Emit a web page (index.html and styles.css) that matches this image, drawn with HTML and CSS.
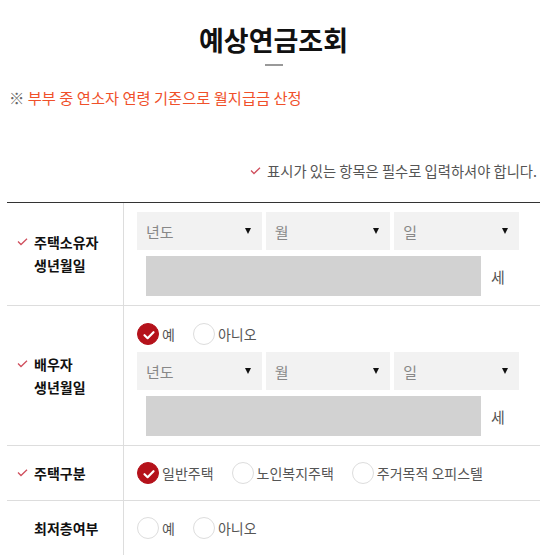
FILE: index.html
```html
<!DOCTYPE html>
<html>
<head>
    <title>예상연금조회</title>
    <link rel="stylesheet" href="styles.css">
</head>
<body>
    <div class="page">
        <h1 class="title">예상연금조회</h1>
        <div class="title-bar"></div>

        <p class="notice"><span class="mark">※</span> 부부 중 연소자 연령 기준으로 월지급금 산정</p>

        <p class="required">
            <svg class="req" width="11" height="8" viewBox="0 0 11 8"><path d="M1 3.5 L4 6.5 L10 0.8" fill="none" stroke="#d0505e" stroke-width="1.3"/></svg>
            표시가 있는 항목은 필수로 입력하셔야 합니다.
        </p>

        <div class="form">
            <!-- 주택소유자 생년월일 -->
            <div class="row">
                <div class="row-label">
                    <div class="label-inner">
                        <svg class="req" width="11" height="8" viewBox="0 0 11 8"><path d="M1 3.5 L4 6.5 L10 0.8" fill="none" stroke="#d0505e" stroke-width="1.3"/></svg>
                        <span>주택소유자<br>생년월일</span>
                    </div>
                </div>
                <div class="row-body pad-date">
                    <div class="dates">
                        <div class="select">년도<i class="arrow"></i></div>
                        <div class="select">월<i class="arrow"></i></div>
                        <div class="select">일<i class="arrow"></i></div>
                    </div>
                    <div class="age">
                        <div class="age-box"></div>
                        <span>세</span>
                    </div>
                </div>
            </div>

            <!-- 배우자 생년월일 -->
            <div class="row">
                <div class="row-label">
                    <div class="label-inner">
                        <svg class="req" width="11" height="8" viewBox="0 0 11 8"><path d="M1 3.5 L4 6.5 L10 0.8" fill="none" stroke="#d0505e" stroke-width="1.3"/></svg>
                        <span>배우자<br>생년월일</span>
                    </div>
                </div>
                <div class="row-body pad-spouse">
                    <div class="radios radios-top">
                        <label class="radio"><span class="dot on"></span>예</label>
                        <label class="radio"><span class="dot"></span>아니오</label>
                    </div>
                    <div class="dates">
                        <div class="select">년도<i class="arrow"></i></div>
                        <div class="select">월<i class="arrow"></i></div>
                        <div class="select">일<i class="arrow"></i></div>
                    </div>
                    <div class="age">
                        <div class="age-box"></div>
                        <span>세</span>
                    </div>
                </div>
            </div>

            <!-- 주택구분 -->
            <div class="row">
                <div class="row-label">
                    <div class="label-inner">
                        <svg class="req" width="11" height="8" viewBox="0 0 11 8"><path d="M1 3.5 L4 6.5 L10 0.8" fill="none" stroke="#d0505e" stroke-width="1.3"/></svg>
                        <span>주택구분</span>
                    </div>
                </div>
                <div class="row-body pad-radio">
                    <div class="radios">
                        <label class="radio"><span class="dot on"></span>일반주택</label>
                        <label class="radio"><span class="dot"></span>노인복지주택</label>
                        <label class="radio"><span class="dot"></span>주거목적 오피스텔</label>
                    </div>
                </div>
            </div>

            <!-- 최저층여부 -->
            <div class="row">
                <div class="row-label">
                    <div class="label-inner">
                        <span class="no-req"></span>
                        <span>최저층여부</span>
                    </div>
                </div>
                <div class="row-body pad-radio">
                    <div class="radios">
                        <label class="radio"><span class="dot"></span>예</label>
                        <label class="radio"><span class="dot"></span>아니오</label>
                    </div>
                </div>
            </div>
        </div>
    </div>
</body>
</html>
```

FILE: styles.css
```css
html, body {
    margin: 0;
    padding: 0;
    overflow: hidden;
}

body {
    font-family: "Noto Sans CJK KR", "Noto Sans", sans-serif;
    color: #333;
    background-color: #fff;
}

.page {
    padding: 0 8px 0 7px;
}

.title {
    margin: 0;
    padding-top: 21px;
    text-align: center;
    font-size: 27px;
    line-height: 38px;
    font-weight: 700;
    color: #111;
}

.title-bar {
    width: 18px;
    height: 2px;
    margin: 5px auto 0;
    background-color: #999;
}

.notice {
    margin: 19px 0 0 2px;
    font-size: 15.3px;
    line-height: 24px;
    color: #f0502a;
}

.notice .mark {
    color: #666;
}

.required {
    margin: 52px 3px 0 0;
    display: flex;
    justify-content: flex-end;
    align-items: center;
    font-size: 14.3px;
    line-height: 20px;
    color: #555;
}

.required .req {
    margin-right: 6px;
}

.form {
    margin-top: 21px;
    border-top: 1px solid #333;
}

.row {
    display: flex;
    border-bottom: 1px solid #ddd;
}

.row-label {
    width: 117px;
    flex-shrink: 0;
    border-right: 1px solid #ddd;
    display: flex;
    align-items: center;
    padding-left: 10px;
    box-sizing: border-box;
    font-size: 14px;
    line-height: 23px;
    font-weight: 700;
    color: #111;
}

.label-inner {
    display: flex;
    align-items: flex-start;
}

.label-inner .req {
    margin: 7px 6px 0 0;
}

.label-inner span {
    display: block;
}

.label-inner .no-req {
    width: 17px;
}

.row-body {
    flex: 1;
    padding: 0 21px 0 13px;
}

.pad-date {
    padding-top: 9px;
    padding-bottom: 9px;
}

.pad-spouse {
    padding-top: 11px;
    padding-bottom: 9px;
}

.pad-radio {
    padding-top: 16px;
    padding-bottom: 16px;
}

.dates {
    display: grid;
    grid-template-columns: 1fr 1fr 1fr;
    gap: 4px;
}

.select {
    height: 38px;
    background-color: #f2f2f2;
    display: flex;
    align-items: center;
    justify-content: space-between;
    padding: 0 11px 0 9px;
    font-size: 15px;
    color: #888;
}

.arrow {
    width: 0;
    height: 0;
    border-left: 3.5px solid transparent;
    border-right: 3.5px solid transparent;
    border-top: 6px solid #111;
}

.age {
    display: flex;
    align-items: center;
    margin: 6px 0 0 9px;
}

.age-box {
    width: 335px;
    height: 40px;
    background-color: #d2d2d2;
}

.age span {
    margin-left: 10px;
    font-size: 15px;
    color: #555;
}

.radios {
    display: flex;
    align-items: center;
    gap: 18px;
}

.radios-top {
    height: 34px;
    margin-bottom: 1px;
}

.radio {
    display: flex;
    align-items: center;
    gap: 3px;
    font-size: 14px;
    line-height: 22px;
    color: #555;
}

.dot {
    width: 22px;
    height: 22px;
    box-sizing: border-box;
    border: 1px solid #ddd;
    border-radius: 50%;
    background-color: #fff;
}

.dot.on {
    border-color: #b5121b;
    background-color: #b5121b;
    background-image: url("data:image/svg+xml,%3Csvg xmlns='http://www.w3.org/2000/svg' width='22' height='22' viewBox='0 0 22 22'%3E%3Cpath d='M6.5 11.2 L9.6 14.2 L15.5 8.2' fill='none' stroke='%23fff' stroke-width='2.2' stroke-linecap='round' stroke-linejoin='round'/%3E%3C/svg%3E");
}
```
